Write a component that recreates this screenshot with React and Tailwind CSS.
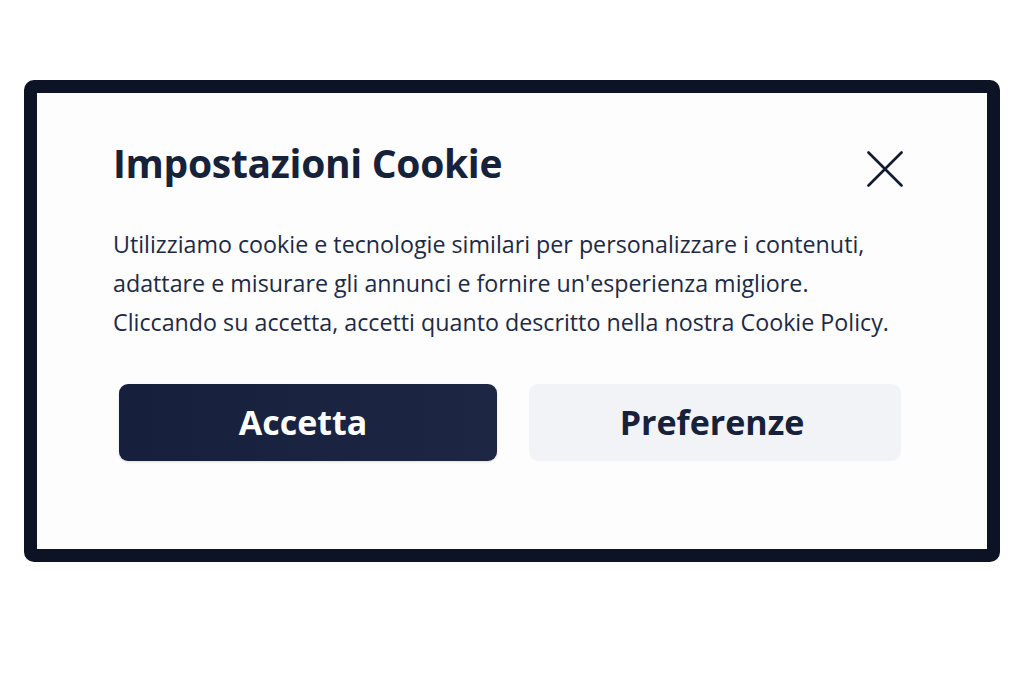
import React from 'react';

export default function App() {
  return (
    <div className="w-[1024px] h-[682px] bg-white pt-[80px] px-[24px]" style={{ fontFamily: '"Open Sans", "Noto Sans", sans-serif' }}>
      <div className="w-[976px] h-[482px] rounded-[10px] border-[13px] border-[#0b1324] bg-[#fdfdfe]">
        <div className="pl-[76px] pr-[84px] pt-[46px]">
          <div className="flex items-start justify-between">
            <h1 className="text-[39px] leading-[48px] font-bold text-[#16213a] tracking-[-0.3px]">Impostazioni Cookie</h1>
            <button className="mt-[12px] w-[36px] h-[36px] text-[#111a2e]">
              <svg viewBox="0 0 36 36" width="36" height="36" fill="none" stroke="currentColor" strokeWidth="2.6" strokeLinecap="round">
                <path d="M1.5 1.5 L34.5 34.5 M34.5 1.5 L1.5 34.5" />
              </svg>
            </button>
          </div>
          <p className="mt-[38px] text-[23.25px] leading-[39px] text-[#1e2a44]">
            Utilizziamo cookie e tecnologie similari per personalizzare i contenuti,<br />
            adattare e misurare gli annunci e fornire un'esperienza migliore.<br />
            Cliccando su accetta, accetti quanto descritto nella nostra Cookie Policy.
          </p>
          <div className="mt-[42px] ml-[6px] flex gap-[32px]">
            <button className="w-[378px] h-[77px] pr-[10px] rounded-[9px] bg-gradient-to-r from-[#161f3b] to-[#1d2744] text-white text-[34px] font-bold shadow-sm">Accetta</button>
            <button className="w-[372px] h-[77px] pr-[6px] rounded-[9px] bg-[#f2f3f6] text-[#16213a] text-[34px] font-bold">Preferenze</button>
          </div>
        </div>
      </div>
    </div>
  );
}
